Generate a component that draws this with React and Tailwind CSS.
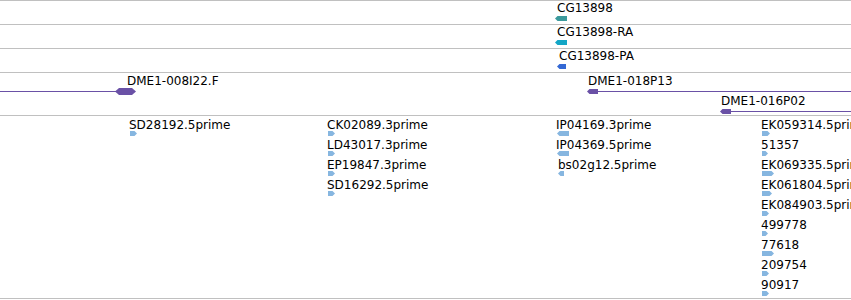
// genome browser track panel
const GRID = "border-[#c0c0c0]";
const PURPLE = "#6a51a6";

function Arrow({ w, h = 5, dir = "right", color, className = "" }) {
  const pts =
    dir === "right"
      ? `0,0 ${w - 2.5},0 ${w},${h / 2} ${w - 2.5},${h} 0,${h}`
      : `0,${h / 2} 2.5,0 ${w},0 ${w},${h} 2.5,${h}`;
  return (
    <svg className={`block shrink-0 ${className}`} width={w} height={h} viewBox={`0 0 ${w} ${h}`}>
      <polygon points={pts} fill={color} />
    </svg>
  );
}

const ests = [
  { rows: [["SD28192.5prime", 7]] },
  {
    rows: [
      ["CK02089.3prime", 7],
      ["LD43017.3prime", 7],
      ["EP19847.3prime", 7],
      ["SD16292.5prime", 7],
    ],
  },
  {
    dir: "left",
    rows: [
      ["IP04169.3prime", 12],
      ["IP04369.5prime", 12],
      ["bs02g12.5prime", 6, true],
    ],
  },
  {
    rows: [
      ["EK059314.5prime", 8],
      ["51357", 6],
      ["EK069335.5prime", 12],
      ["EK061804.5prime", 10],
      ["EK084903.5prime", 7],
      ["499778", 6],
      ["77618", 12],
      ["209754", 7],
      ["90917", 7],
    ],
  },
];

function Gene({ name, color, shift, w = 12 }) {
  return (
    <div className={`h-[24px] border-t ${GRID} pl-[555px] flex flex-col items-start`}>
      <span className={`leading-[14px] ${shift ? "ml-[4px]" : "ml-[2px]"}`}>{name}</span>
      <Arrow w={w} dir="left" color={color} className={`mt-[1px] ${shift ? "ml-[2px]" : ""}`} />
    </div>
  );
}

export default function App() {
  return (
    <div className="w-[851px] h-[300px] overflow-hidden bg-white text-black font-['DejaVu_Sans',sans-serif] text-[12px]">
      <Gene name="CG13898" color="#3b9a9c" />
      <Gene name="CG13898-RA" color="#13a6c6" />
      <Gene name="CG13898-PA" color="#3468d4" shift w={9} />

      {/* clones: features sit at their genomic coordinates */}
      <div className={`relative h-[43px] border-t ${GRID}`}>
        <span className="absolute left-[127px] top-[1px] leading-[14px] whitespace-nowrap">DME1-008I22.F</span>
        <div className="absolute left-0 top-[18px] h-px w-[118px] bg-[#6a51a6]" />
        <svg className="absolute left-[115px] top-[15px]" width="21" height="7" viewBox="0 0 21 7">
          <polygon points="0,3.5 4,0 17,0 21,3.5 17,7 4,7" fill={PURPLE} />
        </svg>

        <div className="absolute left-[587px] top-[1px] right-0 flex flex-col">
          <span className="ml-[1px] leading-[14px] whitespace-nowrap">DME1-018P13</span>
          <div className="mt-[1px] flex items-center">
            <Arrow w={11} dir="left" color={PURPLE} />
            <div className="h-px flex-1 bg-[#6a51a6]" />
          </div>
        </div>

        <div className="absolute left-[720px] top-[21px] right-0 flex flex-col">
          <span className="ml-[1px] leading-[14px] whitespace-nowrap">DME1-016P02</span>
          <div className="mt-[1px] flex items-center">
            <Arrow w={11} dir="left" color={PURPLE} />
            <div className="h-px flex-1 bg-[#6a51a6]" />
          </div>
        </div>
      </div>

      {/* ESTs */}
      <div
        className={`h-[184px] border-y ${GRID} overflow-hidden pl-[129px] pt-[2px] grid grid-cols-[198px_229px_205px_1fr] items-start`}
      >
        {ests.map((col, c) => (
          <div key={c} className="flex flex-col">
            {col.rows.map(([name, w, indent]) => (
              <div key={name} className="h-[20px] flex flex-col items-start">
                <span className={`leading-[14px] whitespace-nowrap ${indent ? "ml-[2px]" : ""}`}>{name}</span>
                <Arrow
                  w={w}
                  dir={col.dir || "right"}
                  color="#86b6e0"
                  className={`-mt-[1px] ml-[1px] ${indent ? "ml-[2px]" : ""}`}
                />
              </div>
            ))}
          </div>
        ))}
      </div>
    </div>
  );
}
